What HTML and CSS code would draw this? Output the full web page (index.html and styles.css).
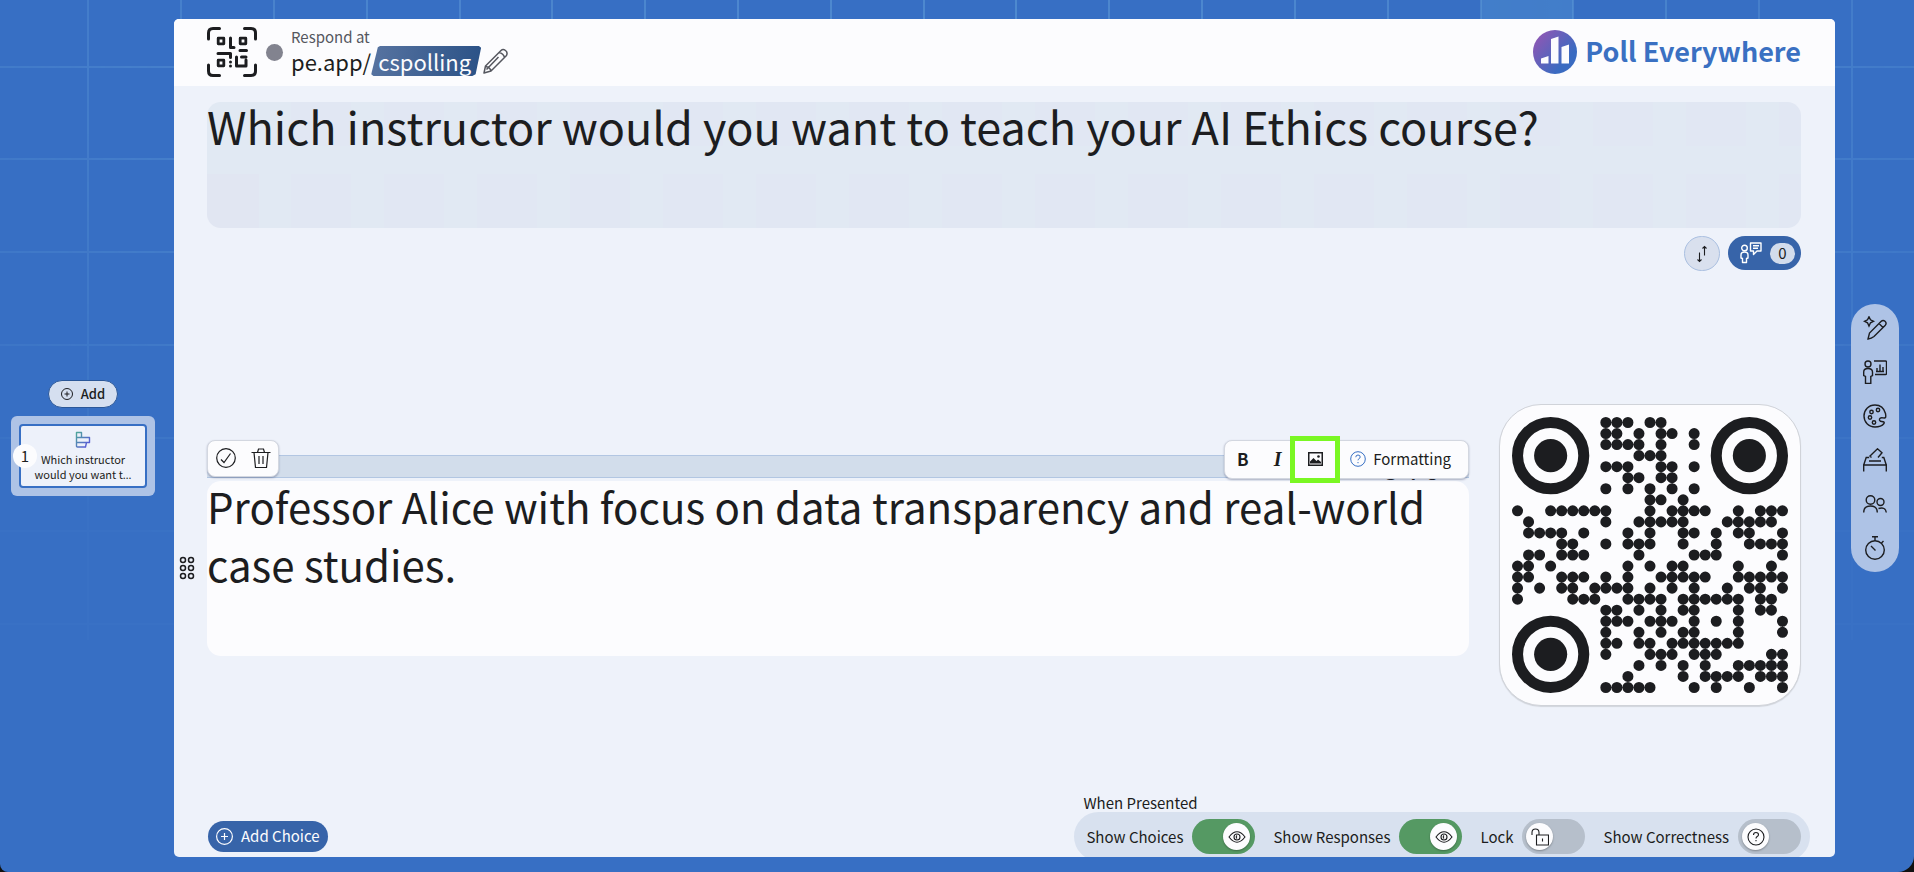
FILE: index.html
```html
<!DOCTYPE html>
<html lang="en">
<head>
<meta charset="utf-8">
<title>Poll Everywhere</title>
<link rel="stylesheet" href="styles.css">
</head>
<body>
<div class="app">
  <svg class="grid-art" viewBox="0 0 1914 872" preserveAspectRatio="xMidYMin slice" aria-hidden="true">
    <defs>
      <radialGradient id="fade" gradientUnits="userSpaceOnUse" cx="957" cy="0" r="1000" gradientTransform="matrix(1.3 0 0 .68 -287 0)">
        <stop offset="0" stop-color="#fff"/><stop offset=".5" stop-color="#fff" stop-opacity=".8"/><stop offset="1" stop-color="#fff" stop-opacity=".12"/>
      </radialGradient>
      <mask id="fadeMask"><rect width="1914" height="640" fill="url(#fade)"/></mask>
    </defs>
    <g mask="url(#fadeMask)">
      <rect x="1481" width="92" height="67" fill="#5b9bd8" opacity=".4"/>
      <path fill="none" stroke="#6aa9de" stroke-opacity=".45" stroke-width="2" d="M88 0v640M181 0v640M274 0v640M367 0v640M460 0v640M552 0v640M645 0v640M738 0v640M831 0v640M924 0v640M1016 0v640M1109 0v640M1202 0v640M1295 0v640M1388 0v640M1481 0v640M1573 0v640M1666 0v640M1759 0v640M1852 0v640M0 67h1914M0 159h1914M0 252h1914M0 345h1914M0 438h1914M0 531h1914M0 624h1914"/>
    </g>
  </svg>

  <aside class="slides">
    <button class="add-slide" type="button">
      <svg width="12" height="12" viewBox="0 0 24 24"><circle cx="12" cy="12" r="11"/><path d="M12 7v10M7 12h10"/></svg>
      Add
    </button>
    <button class="slide" type="button">
      <span class="slide-num">1</span>
      <span class="slide-body">
        <svg width="16" height="17" viewBox="0 0 16 17">
          <defs><linearGradient id="bars" x1="0" y1="0" x2="1" y2="1"><stop offset="0" stop-color="#4fa79a"/><stop offset="1" stop-color="#5b50e0"/></linearGradient></defs>
          <path fill="none" stroke="url(#bars)" stroke-width="1.4" stroke-linejoin="round" d="M1.500 1.500h5v5h-5zM1.500 6.500h13v5h-13zM1.500 11.500h10l-1 4.500h-8q-1 0-1-1z"/>
        </svg>
        <span class="slide-title">Which instructor would you want t<span class="dots">…</span></span>
      </span>
    </button>
  </aside>

  <main class="board">
    <header class="bar">
      <svg class="join-qr" width="50" height="50" viewBox="0 0 50 50" fill="none" stroke="#1c1d20">
        <path stroke-width="3" stroke-linecap="round" d="M1.500 12V6q0-4.500 4.500-4.500h6.500M37.500 1.500H44q4.500 0 4.500 4.500v6M48.500 38v6q0 4.500-4.500 4.500h-6.500M12.500 48.500H6q-4.500 0-4.500-4.500v-6"/>
        <path stroke-width="2.800" stroke-linejoin="round" d="M11.200 11.200h5.600v5.600h-5.600zM33.200 11.200h5.600v5.600h-5.600zM11.200 33.200h5.600v5.600h-5.600z"/>
        <path stroke-width="3" stroke-linecap="round" stroke-linejoin="round" d="M23.500 11v9.500h3.500M33 23.500h6.500M11 26.500h12.500v4M23.500 35v.1M23.500 39v.1M29.500 30v9h9.500v-6M34.500 30h4.500"/>
      </svg>
      <span class="status-dot"></span>
      <div class="join">
        <span class="join-hint">Respond at</span>
        <span class="join-url">pe.app/<span class="join-name">cspolling</span>
          <button class="plain" type="button" aria-label="Edit address">
            <svg width="25" height="26" viewBox="0 0 25 26" fill="none" stroke="#55575f" stroke-width="1.500" stroke-linejoin="round"><path d="M1 25l1.500-7L18 2.500Q20 .5 22.500 2.500t1 5L8 23zM2.500 18.500q4 .5 5.500 4M3.500 21.500L15.500 9M16 4.500q4.500 1 5.500 5"/></svg>
          </button>
        </span>
      </div>
      <div class="brand">
        <svg width="44" height="44" viewBox="0 0 44 44">
          <defs><linearGradient id="brand" x1=".1" y1=".15" x2=".75" y2=".7"><stop offset="0" stop-color="#8b58b5"/><stop offset="1" stop-color="#3a6bc1"/></linearGradient></defs>
          <circle cx="22" cy="22" r="22" fill="url(#brand)"/>
          <path fill="#fcfcfe" d="M8 28.500l7.500-2.500v7.500H8zM18 9l7.500-2.500v27H18zM28.500 17l7.500-2.500v19h-7.500z"/>
        </svg>
        <span class="brand-name">Poll Everywhere</span>
      </div>
    </header>

    <textarea class="question" aria-label="Question" spellcheck="false">Which instructor would you want to teach your AI Ethics course?</textarea>

    <div class="actions">
      <button class="sort" type="button" aria-label="Sort">
        <svg width="12" height="18" viewBox="0 0 12 18" fill="none" stroke="#1c1d20" stroke-width="1.100"><path d="M3.500 7.500v9M1.500 14.500l2 2 2-2M8.500 10.500V1.500M6.500 3.500l2-2 2 2"/></svg>
      </button>
      <button class="people" type="button">
        <svg width="22" height="22" viewBox="0 0 22 22" fill="none" stroke="#fff" stroke-width="1.400" stroke-linejoin="round"><circle cx="4.500" cy="6" r="2.800"/><path d="M2.500 20.500v-4l-1.500-.5v-3q0-3 3.500-3t3.500 3v3l-1.500.5v4zM10.500 1h10.500v8h-4l-3.500 3.500V9h-3zM13 3.800h6M13 6.300h5"/></svg>
        <span class="count">0</span>
      </button>
    </div>

    <section class="stage">
      <div class="choice">
        <div class="choice-head">
          <div class="track"></div>
          <span class="percent">0%</span>
          <div class="tools tools-left">
            <button class="tool" type="button" aria-label="Mark correct"><svg width="20" height="20" viewBox="0 0 20 20"><circle cx="10" cy="10" r="9.300"/><path d="M5 11.500l3 3L14.500 5.500"/></svg></button>
            <button class="tool" type="button" aria-label="Delete"><svg width="20" height="20" viewBox="0 0 20 20"><path d="M.5 4.500h19M6.500 4.500L7.500 1h5l1 3.500M3 4.500l1.500 15h11L17 4.500M8 8v8M12 8v8"/></svg></button>
          </div>
          <div class="tools tools-right">
            <button class="tool bold" type="button">B</button>
            <button class="tool italic" type="button">I</button>
            <button class="tool picture" type="button" aria-label="Insert image"><svg width="15" height="14" viewBox="0 0 15 14"><path fill="none" stroke="#1c1d20" stroke-width="1.500" d="M.75.75h13.500v12.500H.75z"/><path fill="#1c1d20" stroke="none" d="M2 11.500v-2L5.500 6l3 3 1.500-1.500 3 2.500v1.500z"/><circle cx="10.500" cy="4.500" r="1.300" fill="#1c1d20" stroke="none"/></svg></button>
            <button class="tool format" type="button"><svg width="16" height="16" viewBox="0 0 16 16"><circle cx="8" cy="8" r="7.300"/><path d="M5.800 6.200q0-2.200 2.200-2.200t2.200 2q0 1-1.200 1.700-1 .6-1 1.600M8 11v1.200"/></svg>Formatting</button>
          </div>
        </div>
        <button class="handle plain" type="button" aria-label="Reorder choice">
          <svg width="16" height="24" viewBox="0 0 16 24" fill="none" stroke="#1c1d20" stroke-width="1.500"><circle cx="4" cy="4" r="2.500"/><circle cx="12" cy="4" r="2.500"/><circle cx="4" cy="12" r="2.500"/><circle cx="12" cy="12" r="2.500"/><circle cx="4" cy="20" r="2.500"/><circle cx="12" cy="20" r="2.500"/></svg>
        </button>
        <div class="choice-box"><textarea class="choice-text" aria-label="Choice" spellcheck="false">Professor Alice with focus on data transparency and real-world case studies.</textarea></div>
      </div>
      <div class="qr">
        <svg viewBox="0 0 25 25" role="img" aria-label="QR code">
          <g fill="none" stroke="#1c1d20"><circle cx="3.500" cy="3.500" r="3"/><circle cx="21.500" cy="3.500" r="3"/><circle cx="3.500" cy="21.500" r="3"/></g>
          <g fill="#1c1d20"><circle cx="3.500" cy="3.500" r="1.500"/><circle cx="21.500" cy="3.500" r="1.500"/><circle cx="3.500" cy="21.500" r="1.500"/></g>
          <path transform="translate(.5 .5)" fill="none" stroke="#1c1d20" stroke-linecap="round" d="
          M8 0h0M9 0h0M10 0h0M12 0h0M13 0h0
          M8 1h0M9 1h0M11 1h0M13 1h0M14 1h0M16 1h0
          M8 2h0M9 2h0M10 2h0M11 2h0M13 2h0M16 2h0
          M11 3h0M12 3h0M13 3h0
          M8 4h0M9 4h0M10 4h0M13 4h0M14 4h0M16 4h0
          M10 5h0M11 5h0M13 5h0M14 5h0
          M8 6h0M10 6h0M12 6h0M14 6h0M16 6h0
          M12 7h0M13 7h0M15 7h0
          M0 8h0M3 8h0M4 8h0M5 8h0M6 8h0M7 8h0M8 8h0M12 8h0M14 8h0M15 8h0M16 8h0M17 8h0M20 8h0M22 8h0M23 8h0M24 8h0
          M1 9h0M8 9h0M11 9h0M12 9h0M13 9h0M14 9h0M15 9h0M19 9h0M20 9h0M21 9h0M22 9h0M23 9h0
          M1 10h0M2 10h0M3 10h0M4 10h0M6 10h0M10 10h0M12 10h0M15 10h0M16 10h0M18 10h0M20 10h0M21 10h0M24 10h0
          M4 11h0M5 11h0M8 11h0M10 11h0M11 11h0M12 11h0M15 11h0M18 11h0M21 11h0M22 11h0M23 11h0M24 11h0
          M1 12h0M2 12h0M4 12h0M5 12h0M6 12h0M11 12h0M16 12h0M17 12h0M18 12h0M24 12h0
          M0 13h0M1 13h0M3 13h0M10 13h0M12 13h0M14 13h0M15 13h0M20 13h0M23 13h0
          M0 14h0M1 14h0M4 14h0M5 14h0M6 14h0M8 14h0M10 14h0M13 14h0M14 14h0M15 14h0M16 14h0M17 14h0M20 14h0M21 14h0M22 14h0M23 14h0M24 14h0
          M0 15h0M2 15h0M4 15h0M5 15h0M7 15h0M8 15h0M9 15h0M10 15h0M12 15h0M14 15h0M16 15h0M19 15h0M21 15h0M22 15h0M24 15h0
          M0 16h0M5 16h0M6 16h0M7 16h0M10 16h0M11 16h0M12 16h0M13 16h0M15 16h0M16 16h0M17 16h0M18 16h0M19 16h0M20 16h0M22 16h0M23 16h0
          M8 17h0M9 17h0M11 17h0M13 17h0M15 17h0M16 17h0M20 17h0M22 17h0M23 17h0
          M8 18h0M9 18h0M10 18h0M12 18h0M13 18h0M14 18h0M16 18h0M18 18h0M20 18h0M24 18h0
          M8 19h0M11 19h0M13 19h0M15 19h0M16 19h0M20 19h0M24 19h0
          M8 20h0M9 20h0M11 20h0M12 20h0M14 20h0M15 20h0M16 20h0M17 20h0M18 20h0M19 20h0M20 20h0
          M8 21h0M12 21h0M13 21h0M14 21h0M16 21h0M17 21h0M18 21h0M23 21h0M24 21h0
          M11 22h0M13 22h0M15 22h0M17 22h0M20 22h0M21 22h0M22 22h0M23 22h0M24 22h0
          M10 23h0M15 23h0M17 23h0M18 23h0M19 23h0M20 23h0M22 23h0M23 23h0M24 23h0
          M8 24h0M9 24h0M10 24h0M11 24h0M12 24h0M16 24h0M18 24h0M21 24h0M24 24h0"/>
        </svg>
      </div>
    </section>

    <footer class="foot">
      <button class="add-choice" type="button">
        <svg width="17" height="17" viewBox="0 0 17 17"><circle cx="8.500" cy="8.500" r="7.900"/><path d="M8.500 5v7M5 8.500h7"/></svg>
        Add Choice
      </button>
      <div class="presented">
        <h2>When Presented</h2>
        <div class="options">
          <label class="option">Show Choices
            <span class="switch"><input type="checkbox" role="switch" checked><span class="knob"><svg width="18" height="12" viewBox="0 0 18 12"><path d="M1 6q8-10.500 16 0-8 10.500-16 0z"/><circle cx="9" cy="6" r="3"/><path d="M9 4.500q-1.500 1.500 0 3"/></svg></span></span>
          </label>
          <label class="option">Show Responses
            <span class="switch"><input type="checkbox" role="switch" checked><span class="knob"><svg width="18" height="12" viewBox="0 0 18 12"><path d="M1 6q8-10.500 16 0-8 10.500-16 0z"/><circle cx="9" cy="6" r="3"/><path d="M9 4.500q-1.500 1.500 0 3"/></svg></span></span>
          </label>
          <label class="option">Lock
            <span class="switch"><input type="checkbox" role="switch"><span class="knob"><svg width="18" height="18" viewBox="0 0 18 18"><path d="M5.500 7h12v10h-12zM8 7V4.500Q8 1 4.500 1T1 4.500V7M11.500 10.500v3"/></svg></span></span>
          </label>
          <label class="option">Show Correctness
            <span class="switch"><input type="checkbox" role="switch"><span class="knob"><svg width="18" height="18" viewBox="0 0 18 18"><circle cx="9" cy="9" r="8"/><path d="M6.500 7q0-2.500 2.500-2.500t2.500 2.200q0 1.200-1.300 1.900-1.200.7-1.200 1.900M9 12v1.300"/></svg></span></span>
          </label>
        </div>
      </div>
    </footer>
  </main>

  <nav class="rail" aria-label="Tools">
    <div class="rail-items">
      <button class="plain" type="button" aria-label="Create with AI"><svg width="24" height="24" viewBox="0 0 24 24"><path d="M5 23l1.500-6L18 5.500q2-2 4-.3t.3 4L11 20.500q-2.500 2-6 2.500zM16 7.500l4 4M6 .800l1.500 3 3 1.500-3 1.500L6 10 4.500 6.800l-3-1.500 3-1.500z"/></svg></button>
      <button class="plain" type="button" aria-label="Presentation"><svg width="24" height="24" viewBox="0 0 24 24"><circle cx="5" cy="4" r="3"/><path d="M2.500 23.500v-7L.7 15.500V12q0-3.500 4.300-3.500T9.500 12v3.500l-1.700 1v7zM11 1h11.500q1 0 1 1v11.500q0 1-1 1H12M13 11.500h8M14 11.500V8M17 11.500V4.500M20 11.500V7"/></svg></button>
      <button class="plain" type="button" aria-label="Theme"><svg width="24" height="24" viewBox="0 0 24 24"><path d="M22.500 9.500C21 4 17 1 12 1 5.500 1 1 6 1 12s4.500 11 11 11c4 0 7-1 9-3.500q.8-1.500-1-1.800l-2.500-.4q-1.500-.8-1-2.300.6-1.500 3-1.200l2.300.2q1.200-.5 1-2z"/><circle cx="8.500" cy="8" r="1.700"/><circle cx="15" cy="6" r="1.700"/><circle cx="7" cy="13.500" r="1.700"/><circle cx="11" cy="18.500" r="1.700"/></svg></button>
      <button class="plain" type="button" aria-label="Responses"><svg width="24" height="24" viewBox="0 0 24 24"><path d="M.7 23.500V17h22.600v6.500M.7 17l2.500-7.500h3M23.300 17l-2.500-7.500h-2M6 13h12M8.500 9.500L7 8 14.500.8l4.500 4-4 4.700"/></svg></button>
      <button class="plain" type="button" aria-label="Participants"><svg width="24" height="24" viewBox="0 -2 24 24"><circle cx="7.500" cy="6" r="4.300"/><circle cx="17.500" cy="8" r="3.500"/><path d="M.7 18.500q0-6.500 6.800-6.500t6.800 6.500M15.500 14.500q7-2 7.800 4"/></svg></button>
      <button class="plain" type="button" aria-label="Timer"><svg width="24" height="24" viewBox="0 0 24 24"><circle cx="12" cy="14" r="9.300"/><path d="M12 4.500V.8M9 .8h6M18.500 7l2-2M8 10l4.500 4.500"/></svg></button>
    </div>
  </nav>
</div>
</body>
</html>
```
FILE: styles.css
```css
* { box-sizing: border-box; }

html { background: #111; }

body {
  margin: 0;
  color: #1c1d20;
  font-family: "Noto Sans CJK SC", "Noto Sans CJK JP", "Noto Sans", sans-serif;
  font-size: 15px;
  line-height: 20px;
}

button {
  border: 0;
  padding: 0;
  background: none;
  color: inherit;
  font: inherit;
  cursor: pointer;
}

svg { display: block; flex: none; }

.plain { display: flex; }

.app {
  position: relative;
  display: grid;
  grid-template-columns: 174px minmax(0, 1fr) 79px;
  min-height: 100vh;
  padding: 19px 0 15px;
  overflow: hidden;
  border-radius: 0 0 16px 8px;
  background: #376fc4;
}

.grid-art {
  position: absolute;
  inset: 0;
  width: 100%;
  height: 100%;
}

/* Slide list */
.slides {
  position: relative;
  display: flex;
  flex-direction: column;
  align-items: center;
  justify-content: center;
  gap: 8px;
  padding: 0 19px 0 11px;
}

.add-slide {
  display: flex;
  align-items: center;
  gap: 8px;
  height: 28px;
  padding: 0 12px;
  border: 1px solid #2a5799;
  border-radius: 14px;
  background: #d5dff0;
  font-size: 13px;
  font-weight: 500;
}

.add-slide svg { fill: none; stroke: #1c1d20; stroke-width: 2; }

.slide {
  position: relative;
  width: 100%;
  padding: 8px;
  border-radius: 6px;
  background: #aec3e6;
}

.slide-body {
  display: flex;
  flex-direction: column;
  align-items: center;
  gap: 4px;
  height: 64px;
  padding-top: 5px;
  border: 2px solid #376fc4;
  border-radius: 4px;
  background: #edf1fa;
}

.slide-title {
  width: 108px;
  font-size: 11px;
  line-height: 15px;
}

.dots { font-family: "Noto Sans", sans-serif; }

.slide-num {
  position: absolute;
  top: 28px;
  left: 2px;
  width: 24px;
  border-radius: 12px;
  background: #fcfcfe;
  line-height: 24px;
}

/* Board */
.board {
  position: relative;
  display: flex;
  flex-direction: column;
  overflow: hidden;
  border-radius: 5px;
  background: #eef2fa;
}

.bar {
  display: flex;
  align-items: center;
  height: 67px;
  padding: 0 34px 1px 33px;
  background: #fcfcfe;
}

.status-dot {
  width: 17px;
  height: 17px;
  margin: 0 8px 0 9px;
  border-radius: 50%;
  background: #82838f;
}

.join { display: flex; flex-direction: column; }

.join-hint { color: #55575f; line-height: 18px; }

.join-url {
  display: flex;
  align-items: center;
  font-size: 22px;
  line-height: 30px;
}

.join-name {
  margin-right: 2px;
  padding: 0 10px 0 7px;
  background: linear-gradient(100deg, #5874a1, #2a5186);
  clip-path: polygon(6% 4%, 8% 0, 98% 0, 100% 6%, 95% 94%, 92% 100%, 2% 100%, 0 94%);
  color: #fcfcfe;
}

.brand {
  display: flex;
  align-items: center;
  gap: 8px;
  margin-left: auto;
  color: #3a70c2;
  font-size: 27px;
  font-weight: 700;
  line-height: 40px;
}

.brand-name { padding-bottom: 2px; }

.question,
.choice-text {
  display: block;
  width: 100%;
  padding: 0;
  border: 0;
  outline: 0;
  resize: none;
  background: none;
  color: inherit;
  font: inherit;
}

.question {
  width: auto;
  height: 126px;
  margin: 16px 34px 0 33px;
  border-radius: 14px;
  background:
    linear-gradient(#e1e6f2, #e1e6f2) 0 100% / 52px 54px no-repeat,
    repeating-linear-gradient(90deg, #e1e7f3 0 60px, transparent 60px 93px) 84px 100% / 100% 54px no-repeat,
    repeating-linear-gradient(90deg, #e1e7f3 0 60px, transparent 60px 93px) 84px 0 / 100% 44px no-repeat,
    #e1e9f3;
  font-size: 45px;
  line-height: 47px;
}

.actions {
  display: flex;
  justify-content: flex-end;
  gap: 8px;
  padding: 8px 34px 0;
}

.sort,
.people {
  display: flex;
  align-items: center;
  justify-content: center;
  height: 34px;
  border-radius: 18px;
}

.sort {
  width: 36px;
  height: 35px;
  border: 1px solid #a9bfe0;
  background: #d9e0ee;
}

.people {
  gap: 8px;
  padding: 0 6px 0 12px;
  background: #3764a9;
}

.count {
  width: 25px;
  padding-bottom: 1px;
  border-radius: 11px;
  background: #d2dcec;
  line-height: 20px;
}

/* Stage */
.stage {
  flex: 1;
  display: grid;
  grid-template-columns: minmax(0, 1fr) 302px;
  gap: 30px;
  align-items: center;
  padding: 46px 34px 0 0;
}

.choice {
  display: grid;
  grid-template-columns: 33px minmax(0, 1fr);
  row-gap: 3px;
  align-items: center;
}

.choice-head {
  position: relative;
  grid-column: 2;
}

.track {
  height: 23px;
  border-top: 1px solid #b2c6e2;
  border-bottom: 1px solid #b2c6e2;
  background: #d2ddeb;
}

.percent {
  position: absolute;
  right: 28px;
  bottom: -12px;
  font-size: 42px;
  line-height: 58px;
}

.tools {
  position: absolute;
  display: flex;
  align-items: center;
  border: 1px solid #d3d7e0;
  border-radius: 8px;
  background: #fcfcfe;
  box-shadow: 0 1px 2px rgb(40 50 90 / 35%);
}

.tools-left { left: 0; bottom: 1px; height: 37px; }

.tools-right { right: 0; bottom: -1px; height: 39px; }

.tool {
  display: flex;
  align-items: center;
  justify-content: center;
  width: 35px;
  height: 100%;
}

.tool svg { fill: none; stroke: #1c1d20; stroke-width: 1.2; }

.bold { font-size: 17px; font-weight: 700; }

.italic {
  font-family: "Liberation Serif", serif;
  font-size: 20px;
  font-style: italic;
  font-weight: 700;
}

.picture {
  flex: none;
  width: 50px;
  height: 47px;
  margin: 0 -7px 0 -5px;
  border: 5px solid #7af723;
}

.format {
  gap: 7px;
  width: auto;
  padding: 0 17px;
}

.format svg { stroke: #376fc4; stroke-width: 1; }

.handle { justify-content: center; padding-right: 8px; }

.choice-box {
  height: 175px;
  overflow: hidden;
  border-radius: 14px;
  background: #fcfcfe;
}

.choice-text {
  height: 175px;
  margin-top: -4px;
  font-size: 42px;
  line-height: 58px;
}

.qr {
  padding: 12px;
  border: 1px solid #d0d3d9;
  border-radius: 42px;
  background: #fcfcfe;
  box-shadow: 0 1px 1px rgb(0 0 0 / 12%);
}

/* Footer */
.foot {
  display: flex;
  align-items: flex-end;
  justify-content: space-between;
  padding: 0 25px 0 34px;
}

.add-choice {
  display: flex;
  align-items: center;
  gap: 8px;
  height: 31px;
  margin-bottom: 5px;
  padding: 0 8px 1px;
  border-radius: 16px;
  background: #3764a9;
  color: #fcfcfe;
}

.add-choice svg { fill: none; stroke: #fcfcfe; stroke-width: 1.2; }

.presented { margin-bottom: -4px; }

.presented h2 {
  margin: 0 9px;
  font-size: 15px;
  font-weight: 400;
  line-height: 19px;
}

.options {
  display: flex;
  align-items: center;
  gap: 18px;
  height: 49px;
  padding: 0 9px 0 12px;
  border-radius: 25px;
  background: #d8e1ef;
}

.option { display: flex; align-items: center; gap: 9px; }

.switch {
  position: relative;
  display: flex;
  width: 63px;
  height: 35px;
}

.switch input {
  appearance: none;
  width: 100%;
  margin: 0;
  border-radius: 18px;
  background: #b6bfcb;
}

.switch input:checked { background: #559963; }

.knob {
  position: absolute;
  top: 4px;
  left: 4px;
  display: grid;
  place-items: center;
  width: 27px;
  height: 27px;
  border-radius: 50%;
  background: #fcfcfe;
  box-shadow: 0 1px 2px rgb(0 0 0 / 30%);
}

.switch input:checked + .knob { right: 5px; left: auto; }

.knob svg { fill: none; stroke: #1c1d20; stroke-width: 1.1; }

/* Tool rail */
.rail {
  position: relative;
  display: flex;
  align-items: center;
  padding-left: 16px;
}

.rail-items {
  display: flex;
  flex-direction: column;
  align-items: center;
  gap: 20px;
  width: 48px;
  padding: 12px 0;
  border-radius: 24px;
  background: #aec3e6;
}

.rail-items svg { fill: none; stroke: #1c1d20; stroke-width: 1.4; }
```
